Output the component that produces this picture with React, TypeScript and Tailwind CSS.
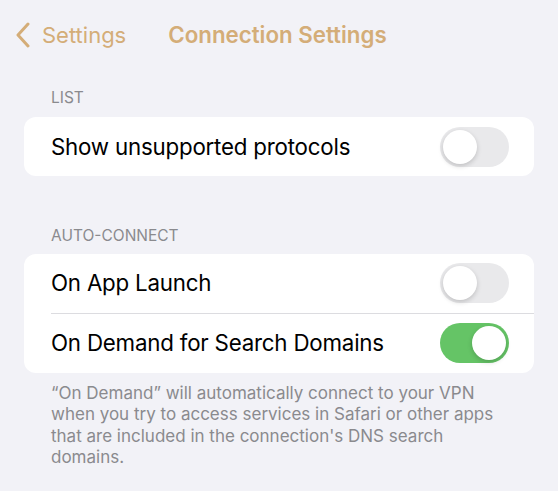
import React from 'react';

const Toggle = ({ on }: { on: boolean }) => {
  return (
    <div
      className={
        on
          ? 'w-[69px] h-[40px] rounded-full bg-[#65c466] p-[3px] flex justify-end'
          : 'w-[69px] h-[40px] rounded-full bg-[#e9e9eb] p-[3px] flex justify-start'
      }
    >
      <div className="w-[34px] h-[34px] rounded-full bg-white shadow-[0_2px_5px_rgba(0,0,0,0.18)]" />
    </div>
  );
};

const Row = ({ label, on, divider }: { label: string; on: boolean; divider?: boolean }) => {
  return (
    <div className="pl-[27px]">
      <div className={divider ? 'border-b border-[#dcdce0]' : ''}>
        <div className="h-[59px] flex items-center justify-between pr-[25px]">
          <span className="text-[22.3px] text-black tracking-[-0.2px]">{label}</span>
          <Toggle on={on} />
        </div>
      </div>
    </div>
  );
};

const App = () => {
  return (
    <div className="min-h-screen w-[558px] h-[491px] bg-[#f2f2f7] font-['Inter',sans-serif] overflow-hidden">
      <div className="h-[70px] flex items-center pl-[15px]">
        <div className="flex items-center gap-[11px] text-[#d4ad78]">
          <svg width="16" height="26" viewBox="0 0 16 26" fill="none">
            <path d="M13 2 L3 13 L13 24" stroke="#d4ad78" strokeWidth="3" strokeLinecap="round" strokeLinejoin="round" />
          </svg>
          <span className="text-[22px]">Settings</span>
        </div>
        <span className="ml-[42px] text-[22.3px] font-semibold text-[#d4ad78]">Connection Settings</span>
      </div>

      <div className="px-[24px] pt-[16px]">
        <div className="pl-[27px] text-[15.5px] text-[#8a8a8e] mb-[8px]">LIST</div>
        <div className="bg-white rounded-[12px]">
          <Row label="Show unsupported protocols" on={false} />
        </div>

        <div className="pl-[27px] text-[15.5px] text-[#8a8a8e] mt-[48px] mb-[6px]">AUTO-CONNECT</div>
        <div className="bg-white rounded-[12px]">
          <Row label="On App Launch" on={false} divider />
          <Row label="On Demand for Search Domains" on={true} />
        </div>

        <p className="pl-[27px] w-[486px] pt-[10px] text-[17px] leading-[21.5px] text-[#8a8a8e]">
          “On Demand” will automatically connect to your VPN when you try to access services in Safari or other apps that are included in the connection's DNS search domains.
        </p>
      </div>
    </div>
  );
};

export default App;
